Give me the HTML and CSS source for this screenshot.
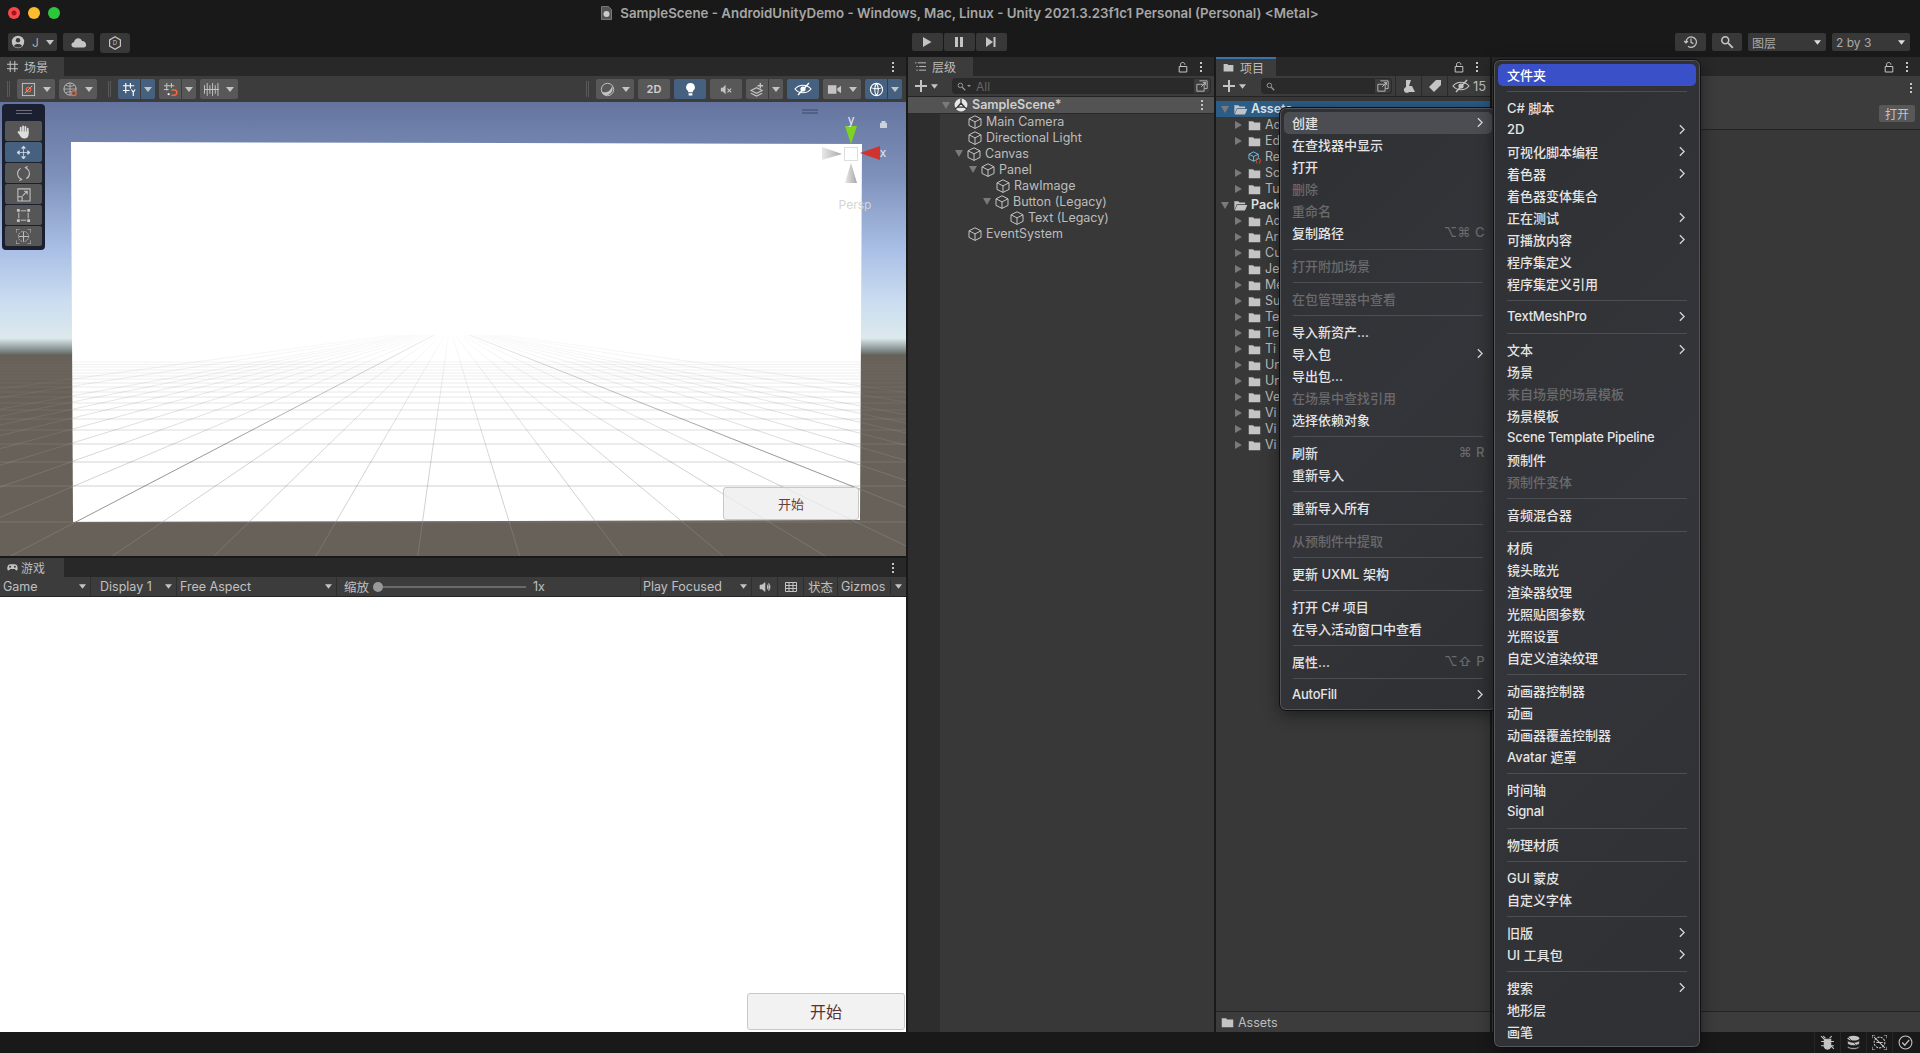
FILE: index.html
```html
<!DOCTYPE html>
<html lang="zh">
<head>
<meta charset="utf-8">
<title>SampleScene - AndroidUnityDemo</title>
<link rel="stylesheet" href="styles.css">
</head>
<body>
<svg class="sprite" aria-hidden="true">
  <symbol id="cube" viewBox="0 0 14 14"><path d="M7 .8 13 3.8V10.4L7 13.4 1 10.4V3.8ZM1 3.8 7 6.9 13 3.8M7 6.9V13.4" fill="none" stroke="currentColor" stroke-width="1"/></symbol>
  <symbol id="folder" viewBox="0 0 14 14"><path d="M.8 2.4H5.4L6.8 3.8H13.2V12.2H.8Z" fill="currentColor"/></symbol>
  <symbol id="folder-open" viewBox="0 0 16 14"><path d="M1 2.4H5.6L7 3.8H13V5.6H4L1.4 12V3ZM4.4 6.4H15.4L12.8 12.4H1.8Z" fill="currentColor"/></symbol>
  <symbol id="lock" viewBox="0 0 10 12"><path d="M2.6 5V3.2C2.6 .9 6.8 .9 6.8 3.2V3.8M1.2 5.5H8.8V11H1.2Z" fill="none" stroke="currentColor" stroke-width="1"/></symbol>
  <symbol id="dots" viewBox="0 0 4 12"><path d="M1 1h2v2H1zM1 5h2v2H1zM1 9h2v2H1z" fill="currentColor"/></symbol>
  <symbol id="plus" viewBox="0 0 14 14"><path d="M7 1V13M1 7H13" stroke="currentColor" stroke-width="2"/></symbol>
  <symbol id="caret" viewBox="0 0 8 5"><path d="M0 0H8L4 5Z" fill="currentColor"/></symbol>
  <symbol id="chev" viewBox="0 0 7 12"><path d="M1 1 6 6 1 11" fill="none" stroke="currentColor" stroke-width="1.4"/></symbol>
  <symbol id="search" viewBox="0 0 12 12"><circle cx="4.5" cy="4.5" r="3" fill="none" stroke="currentColor" stroke-width="1.3"/><path d="M7 7 11 11" stroke="currentColor" stroke-width="1.6"/></symbol>
  <symbol id="adv" viewBox="0 0 14 14"><path d="M4 1H13V10H10M1 5H9.5V13H1ZM6 8 11 3M8 3H11V6" fill="none" stroke="currentColor" stroke-width="1"/></symbol>
  <symbol id="unity" viewBox="0 0 14 14"><circle cx="7" cy="7" r="6.4" fill="currentColor"/><path d="M7 .8V5L3.4 9.2.9 11M7 5 10.6 9.2 13.1 11M3.4 9.2H10.6" fill="none" stroke="#353535" stroke-width="1.3"/></symbol>
  <symbol id="grid" viewBox="0 0 12 12"><path d="M3.5 0V12M8.5 0V12M0 3.5H12M0 8.5H12" stroke="currentColor" stroke-width="1.1"/></symbol>
  <symbol id="eye-off" viewBox="0 0 18 14"><path d="M1 7C5 2 13 2 17 7 13 12 5 12 1 7Z" fill="none" stroke="currentColor" stroke-width="1.2"/><circle cx="9" cy="7" r="2.6" fill="currentColor"/><path d="M4 13 15 1" stroke="currentColor" stroke-width="1.4"/></symbol>
</svg>

<header class="titlebar">
  <div class="lights"><i class="light red"></i><i class="light yellow"></i><i class="light green"></i></div>
  <svg class="doc" viewBox="0 0 11 14"><path d="M.5.5H7.5L10.5 3.5V13.5H.5Z" fill="#555" stroke="#777"/><circle cx="5.500" cy="8" r="3" fill="#ccc"/></svg>
  <span class="wintitle">SampleScene - AndroidUnityDemo - Windows, Mac, Linux - Unity 2021.3.23f1c1 Personal (Personal) &lt;Metal&gt;</span>
</header>

<nav class="maintools">
  <div class="mt-left">
    <div class="mbtn w49"><svg class="ic14" viewBox="0 0 14 14"><circle cx="7" cy="7" r="6.2" fill="#c4c4c4"/><circle cx="7" cy="5.2" r="2.2" fill="#3a3a3a"/><path d="M3 11C4 8.4 10 8.4 11 11 9 13 5 13 3 11Z" fill="#3a3a3a"/></svg><span class="mlabel">J</span><svg class="car"><use href="#caret"/></svg></div>
    <div class="mbtn w31"><svg class="ic-cloud" viewBox="0 0 16 11"><path d="M3.500 10.500C-.5 10.500-.5 5.500 3 5.200 3.500 1 9.500-.5 11 4 15.500 3.800 16.800 10.500 12.500 10.500Z" fill="#c4c4c4"/></svg></div>
    <div class="mbtn w30 tall"><svg class="ic14" viewBox="0 0 14 14"><path d="M7 .8 12.400 3.900V10.100L7 13.200 1.600 10.100V3.900Z" fill="none" stroke="#c4c4c4" stroke-width="1.2"/><text class="hexd" x="7" y="9.200" text-anchor="middle">D</text></svg></div>
  </div>
  <div class="mt-center">
    <div class="mbtn w31"><svg class="ic10" viewBox="0 0 10 10"><path d="M1 0 9.500 5 1 10Z" fill="#c4c4c4"/></svg></div>
    <div class="mbtn w31"><svg class="ic10" viewBox="0 0 10 10"><path d="M1 0H4V10H1ZM6 0H9V10H6Z" fill="#c4c4c4"/></svg></div>
    <div class="mbtn w31"><svg class="ic10" viewBox="0 0 10 10"><path d="M0 0 7 5 0 10ZM7.500 0H9.500V10H7.500Z" fill="#c4c4c4"/></svg></div>
  </div>
  <div class="mt-right">
    <div class="mbtn w31"><svg class="ic14" viewBox="0 0 14 14"><path d="M2 7A5.200 5.200 0 1 1 4 11.200M0 6 2 8 4 6M7 3.500V7.400L9.400 8.600" fill="none" stroke="#c4c4c4" stroke-width="1.2"/></svg></div>
    <div class="mbtn w30 gap-l"><svg class="ic14"><use href="#search" color="#c4c4c4"/></svg></div>
    <div class="mselect gap-l"><span>图层</span><svg class="car small"><use href="#caret"/></svg></div>
    <div class="mselect gap-l"><span>2 by 3</span><svg class="car small"><use href="#caret"/></svg></div>
  </div>
</nav>

<main class="workspace">
  <div class="leftcol">
    <section class="scene panel">
      <div class="tabbar">
        <div class="tab w64"><svg class="tabic"><use href="#grid"/></svg><span>场景</span></div>
        <svg class="dots"><use href="#dots"/></svg>
      </div>
      <div class="scenetools">
        <i class="grip"></i>
        <div class="sbtn w38 m7"><svg class="s16" viewBox="0 0 16 16"><rect x="1.500" y="1.500" width="13" height="13" fill="none" stroke="#c4c4c4"/><path d="M4 12 12 4" stroke="#c4c4c4"/><circle cx="8" cy="8" r="2.400" fill="none" stroke="#f26a3c" stroke-width="1.2"/></svg><svg class="car"><use href="#caret"/></svg></div>
        <div class="sbtn w38"><svg class="s16" viewBox="0 0 16 16"><circle cx="7.500" cy="7.500" r="6.500" fill="none" stroke="#c4c4c4"/><path d="M1 7.500H14M7.500 1V14M3 3.500C6 5 9 5 12 3.500M3 11.500C6 10 9 10 12 11.500" fill="none" stroke="#c4c4c4" stroke-width=".8"/><circle cx="11.500" cy="12" r="2.500" fill="#585858" stroke="#f26a3c" stroke-width="1.2"/></svg><svg class="car"><use href="#caret"/></svg></div>
        <i class="grip m11"></i>
        <div class="split m7 on"><div class="seg a"><svg class="s16" viewBox="0 0 16 16"><path d="M4 1V12M9 1V7M1 4H13M1 9H8M10 8 12 11 14 8M12 11V15" fill="none" stroke="#fff" stroke-width="1.2"/></svg></div><div class="seg b"><svg class="car"><use href="#caret"/></svg></div></div>
        <div class="split"><div class="seg a"><svg class="s16" viewBox="0 0 16 16"><path d="M4 1V9M9 1V6M1 4H12M1 8H6" fill="none" stroke="#c4c4c4" stroke-width="1.1"/><path d="M9 8.500H12A2.600 2.600 0 0 1 12 14H9" fill="none" stroke="#f26a3c" stroke-width="1.6"/><path d="M5 12H7V14H5Z" fill="#fff"/></svg></div><div class="seg b"><svg class="car"><use href="#caret"/></svg></div></div>
        <div class="sbtn w38"><svg class="s16" viewBox="0 0 14 14"><path d="M.5 3V11M3 1V13M5.500 3V11M8 1V13M10.500 3V11M13 1V13M0 7H14" fill="none" stroke="#c4c4c4" stroke-width=".9"/></svg><svg class="car"><use href="#caret"/></svg></div>
        <i class="grip auto"></i>
        <div class="sbtn w38 m7"><svg class="s16" viewBox="0 0 16 16"><circle cx="8" cy="8" r="6.600" fill="none" stroke="#c4c4c4"/><path d="M2 10C6 12 11 11 13 4 15 10 10 15 5 14 3.500 13.500 2.500 12 2 10Z" fill="#c4c4c4"/></svg><svg class="car"><use href="#caret"/></svg></div>
        <div class="sbtn w32 txt">2D</div>
        <div class="sbtn w32 on"><svg class="s16" viewBox="0 0 16 16"><path d="M8 1A4.600 4.600 0 0 0 5.500 9.500V11H10.500V9.500A4.600 4.600 0 0 0 8 1ZM6 12H10V14.500H6Z" fill="#fff"/></svg></div>
        <div class="sbtn w32"><svg class="s16" viewBox="0 0 16 16"><path d="M2 6H4L7 3V13L4 10H2Z" fill="#c4c4c4"/><path d="M9 7 13 11M13 7 9 11" stroke="#c4c4c4" stroke-width="1.200"/></svg></div>
        <div class="split"><div class="seg a"><svg class="s16" viewBox="0 0 16 16"><path d="M1 9 7 6 13 9 7 12ZM1 12 7 15 13 12" fill="none" stroke="#c4c4c4" stroke-width="1.200"/><path d="M11 1V7M8 4H14" stroke="#c4c4c4" stroke-width="1.400"/></svg></div><div class="seg b"><svg class="car"><use href="#caret"/></svg></div></div>
        <div class="sbtn w32 on"><svg class="s18"><use href="#eye-off" color="#fff"/></svg></div>
        <div class="sbtn w38"><svg class="s16" viewBox="0 0 16 16"><path d="M1 3.500H10V12.500H1ZM11 7 15 4V12L11 9Z" fill="#c4c4c4"/></svg><svg class="car"><use href="#caret"/></svg></div>
        <div class="split on"><div class="seg a"><svg class="s16" viewBox="0 0 16 16"><circle cx="8" cy="8" r="6.500" fill="none" stroke="#fff" stroke-width="1.200"/><path d="M1.800 6C5 7.500 11 7.500 14.200 6M8 1.500C5.500 5 5.500 11 8 14.500M8 1.500C10.500 5 10.500 11 8 14.500" fill="none" stroke="#fff" stroke-width="1.100"/></svg></div><div class="seg b"><svg class="car"><use href="#caret"/></svg></div></div>
      </div>
      <div class="viewport">
        <svg class="world" viewBox="0 102 906 454" preserveAspectRatio="none">
          <defs>
            <linearGradient id="sky" x1="0" y1="102" x2="0" y2="356" gradientUnits="userSpaceOnUse">
              <stop offset="0" stop-color="#64749e"/><stop offset=".3" stop-color="#7f92bc"/><stop offset=".58" stop-color="#a9bfe5"/><stop offset=".78" stop-color="#cadcf0"/><stop offset=".93" stop-color="#dce9ec"/><stop offset=".97" stop-color="#8f9b9b"/><stop offset="1" stop-color="#5f5c56"/>
            </linearGradient>
            <linearGradient id="fadeDark" x1="0" y1="335" x2="0" y2="470" gradientUnits="userSpaceOnUse">
              <stop offset="0" stop-color="#000" stop-opacity=".02"/><stop offset="1" stop-color="#000" stop-opacity=".2"/>
            </linearGradient>
            <linearGradient id="fadeMajor" x1="0" y1="335" x2="0" y2="440" gradientUnits="userSpaceOnUse">
              <stop offset="0" stop-color="#000" stop-opacity=".05"/><stop offset="1" stop-color="#000" stop-opacity=".3"/>
            </linearGradient>
            <linearGradient id="fadeLight" x1="0" y1="345" x2="0" y2="480" gradientUnits="userSpaceOnUse">
              <stop offset="0" stop-color="#fff" stop-opacity=".02"/><stop offset="1" stop-color="#fff" stop-opacity=".15"/>
            </linearGradient>
            <clipPath id="quad"><polygon points="71,142 862,144 860,520 73,522"/></clipPath>
            <linearGradient id="cone" x1="0" y1="0" x2="1" y2="0"><stop offset="0" stop-color="#e8e8e8"/><stop offset="1" stop-color="#a8a8a8"/></linearGradient>
            <path id="vlines" d="M-1211 556L391.500 335M-1007.400 556L398.600 335M-803.800 556L405.700 335M-702 556L409.300 335M-600.200 556L412.800 335M-498.400 556L416.400 335M-396.600 556L420 335M-294.800 556L423.500 335M-193 556L427.100 335M-91.200 556L430.600 335M10.600 556L434.200 335M112.400 556L437.700 335M214.200 556L441.300 335M316 556L444.800 335M417.800 556L448.400 335M519.600 556L452 335M621.400 556L455.500 335M723.200 556L459.100 335M825 556L462.600 335M926.800 556L466.200 335M1028.600 556L469.700 335M1130.400 556L473.300 335M1232.200 556L476.800 335M1334 556L480.400 335M1435.800 556L484 335M1537.600 556L487.500 335M1639.400 556L491.100 335M1843 556L498.200 335M2046.600 556L505.300 335"/>
            <path id="hlines" d="M0 522H906M0 486H906M0 462H906M0 444H906M0 430H906M0 419H906M0 410H906M0 403H906M0 397H906M0 392H906M0 387H906M0 383H906M0 379H906M0 376H906M0 373H906M0 370H906M0 367H906M0 364.500H906M0 362H906"/>
          </defs>
          <rect x="0" y="102" width="906" height="254" fill="url(#sky)"/>
          <rect x="0" y="356" width="906" height="200" fill="#676159"/>
          <use href="#vlines" class="glight"/>
          <use href="#hlines" class="glight"/>
          <polygon points="71,142 862,144 860,520 73,522" fill="#fff"/>
          <g clip-path="url(#quad)">
            <use href="#vlines" class="gdark"/>
            <use href="#hlines" class="gdark"/>
            <path d="M10.600 556L434.200 335M1028.600 556L469.700 335" class="gmajor"/>
          </g>
          <path d="M802 110H818M802 113H818" class="handle"/>
          <path d="M880 123H887V128H880ZM881.500 123V121H885.500V123" fill="#ccd2dc"/>
          <path d="M845 126H857L851 144Z" fill="#7ed321"/>
          <path d="M880 146V160L860 153Z" fill="#d0342c"/>
          <path d="M822 147V160L842 154Z" fill="url(#cone)"/>
          <path d="M845 183H857L851 163Z" fill="url(#cone)"/>
          <rect x="844.500" y="147.500" width="13" height="13" fill="#fff" stroke="#ddd"/>
          <text x="851" y="124" class="gz dark" text-anchor="middle">y</text>
          <text x="883" y="157" class="gz" text-anchor="middle">x</text>
          <text x="855" y="209" class="gz persp" text-anchor="middle">Persp</text>
        </svg>
        <div class="overlaytools">
          <div class="handlebar"></div>
          <div class="tool"><svg viewBox="0 0 16 16"><path d="M5 9V4M7.500 8V2.500M10 8V3M12.500 9V5" fill="none" stroke="#ddd" stroke-width="1.900" stroke-linecap="round"/><path d="M4 8H13.500V11C13.500 14 11.500 15.500 9 15.500 6.500 15.500 5.500 14.500 4 12L1.500 8.500 2.800 7.500Z" fill="#ddd"/></svg></div>
          <div class="tool on"><svg viewBox="0 0 16 16"><path d="M8 1 10 3.500H6ZM8 15 6 12.500H10ZM1 8 3.500 6V10ZM15 8 12.500 10V6ZM4 8H12M8 4V12" fill="#d6e0ee" stroke="#d6e0ee" stroke-width=".8"/></svg></div>
          <div class="tool"><svg viewBox="0 0 16 16"><path d="M6 14A6.300 6.300 0 0 1 5 2.500M10 2A6.300 6.300 0 0 1 11 13.500M3 12 6 14.500 3.500 15.500M13 4 10 1.500 12.500.5" fill="none" stroke="#c4c4c4" stroke-width="1.100"/></svg></div>
          <div class="tool"><svg viewBox="0 0 16 16"><path d="M2 2H15V15H2ZM2 10.500H6.500V15M7 9.500 12 4.500M8.500 4.500H12V8" fill="none" stroke="#c4c4c4" stroke-width="1.100"/></svg></div>
          <div class="tool"><svg viewBox="0 0 16 16"><path d="M5 3H11M5 13H11M3 5V11M13 5V11" fill="none" stroke="#c4c4c4"/><path d="M1 1H4V4H1ZM12 1H15V4H12ZM1 12H4V15H1ZM12 12H15V15H12Z" fill="#c4c4c4"/></svg></div>
          <div class="tool"><svg viewBox="0 0 16 16"><circle cx="8" cy="8" r="5.500" fill="none" stroke="#c4c4c4" stroke-dasharray="1.500 1"/><path d="M8 3V13M3 8H13M0 4 0 0 4 0M16 12 16 16 12 16M12 0H16V4M0 12V16H4" fill="none" stroke="#c4c4c4"/></svg></div>
        </div>
        <div class="uibtn small">开始</div>
      </div>
    </section>
    <section class="game panel">
      <div class="tabbar">
        <div class="tab w64 tight"><svg class="tabic" viewBox="0 0 14 10"><path d="M4 1H10C13 1 14 5 13.500 7.500 13 9.500 11 9 10 7H4C3 9 1 9.500.5 7.500 0 5 1 1 4 1Z" fill="#c4c4c4"/><circle cx="4" cy="4" r="1.300" fill="#3c3c3c"/><circle cx="10" cy="4" r="1.300" fill="#3c3c3c"/></svg><span>游戏</span></div>
        <svg class="dots"><use href="#dots"/></svg>
      </div>
      <div class="gametools">
        <div class="gcell g90"><span>Game</span><svg class="car tiny"><use href="#caret"/></svg></div>
        <div class="gcell g86"><span>Display 1</span><svg class="car tiny"><use href="#caret"/></svg></div>
        <div class="gcell g160"><span>Free Aspect</span><svg class="car tiny"><use href="#caret"/></svg></div>
        <div class="gcell gzoom"><span>缩放</span><div class="slider"><i class="knob"></i></div><span>1x</span></div>
        <div class="gcell g111"><span>Play Focused</span><svg class="car tiny"><use href="#caret"/></svg></div>
        <div class="gcell g26 center"><svg class="ic12" viewBox="0 0 12 12"><path d="M1 4H3L6 1.500V10.500L3 8H1ZM8 3.500C9.500 5 9.500 7 8 8.500M9.500 2C11.500 4.500 11.500 7.500 9.500 10" fill="#c4c4c4" stroke="#c4c4c4" stroke-width=".6"/></svg></div>
        <div class="gcell g26 center"><svg class="ic12" viewBox="0 0 12 12"><path d="M.5 1.500H11.500V10.500H.5ZM.5 4.500H11.500M.5 7.500H11.500M4 1.500V10.500M8 1.500V10.500" fill="none" stroke="#c4c4c4"/></svg></div>
        <div class="gcell g34 center"><span>状态</span></div>
        <div class="gcell gend"><span>Gizmos</span><i class="vsep"></i><svg class="car tiny"><use href="#caret"/></svg></div>
      </div>
      <div class="gameview"><div class="uibtn big">开始</div></div>
    </section>
  </div>

  <section class="hierarchy panel">
    <div class="tabbar">
      <div class="tab w65"><svg class="tabic" viewBox="0 0 12 10"><path d="M0 1H1.500M3 1H12M1.500 5H3M4.500 5H12M1.500 9H3M4.500 9H12" stroke="#c4c4c4" stroke-width="1"/></svg><span>层级</span></div>
      <svg class="lock"><use href="#lock"/></svg>
      <svg class="dots near"><use href="#dots"/></svg>
    </div>
    <div class="listtools">
      <svg class="plus"><use href="#plus"/></svg><svg class="car tiny m2"><use href="#caret"/></svg>
      <div class="field hf"><svg class="fsearch"><use href="#search"/></svg><i class="fcaret"></i><span class="ph">All</span><div class="fadv"><svg><use href="#adv"/></svg></div></div>
    </div>
    <div class="tree">
      <div class="row scene-row l0"><i class="tw open"></i><svg class="unity"><use href="#unity"/></svg><span class="sname">SampleScene*</span><svg class="dots rowdots"><use href="#dots"/></svg></div>
      <div class="row l1"><svg class="cube"><use href="#cube"/></svg><span>Main Camera</span></div>
      <div class="row l1"><svg class="cube"><use href="#cube"/></svg><span>Directional Light</span></div>
      <div class="row l1"><i class="tw open"></i><svg class="cube"><use href="#cube"/></svg><span>Canvas</span></div>
      <div class="row l2"><i class="tw open"></i><svg class="cube"><use href="#cube"/></svg><span>Panel</span></div>
      <div class="row l3"><svg class="cube"><use href="#cube"/></svg><span>RawImage</span></div>
      <div class="row l3"><i class="tw open"></i><svg class="cube"><use href="#cube"/></svg><span>Button (Legacy)</span></div>
      <div class="row l4"><svg class="cube"><use href="#cube"/></svg><span>Text (Legacy)</span></div>
      <div class="row l1"><svg class="cube"><use href="#cube"/></svg><span>EventSystem</span></div>
    </div>
  </section>

  <section class="project panel">
    <div class="tabbar">
      <div class="tab w60 blue"><svg class="tabic"><use href="#folder"/></svg><span>项目</span></div>
      <svg class="lock"><use href="#lock"/></svg>
      <svg class="dots near"><use href="#dots"/></svg>
    </div>
    <div class="listtools">
      <svg class="plus"><use href="#plus"/></svg><svg class="car tiny m2"><use href="#caret"/></svg>
      <div class="field pf"><svg class="fsearch"><use href="#search"/></svg><div class="fadv"><svg><use href="#adv"/></svg></div></div>
      <div class="pbtn"><svg viewBox="0 0 14 14"><path d="M4 1H9L7 7H10L13 13H7A3 3 0 1 1 4 8Z" fill="#c4c4c4"/></svg></div>
      <div class="pbtn"><svg viewBox="0 0 14 14"><path d="M8 1H13V6L6 13 1 8Z" fill="#c4c4c4"/></svg></div>
      <div class="pbtn wide"><svg class="eye"><use href="#eye-off" color="#c4c4c4"/></svg><span>15</span></div>
    </div>
    <div class="plist">
      <div class="prow top sel"><i class="tw open"></i><svg class="fold-o"><use href="#folder-open"/></svg><b>Assets</b></div>
      <div class="prow"><i class="tw"></i><svg class="fold"><use href="#folder"/></svg><span>Ad</span></div>
      <div class="prow"><i class="tw"></i><svg class="fold"><use href="#folder"/></svg><span>Ed</span></div>
      <div class="prow"><i class="tw none"></i><svg class="fold" viewBox="0 0 14 14"><path d="M6 1 11 3.500V8.500L6 11 1 8.500V3.500ZM1 3.500 6 6 11 3.500M6 6V11" fill="none" stroke="#6fc4ee" stroke-width="1"/><path d="M10 7.500C9 7.500 9.500 10 8.500 10.500 9.500 11 9 13.500 10 13.500M12 7.500C13 7.500 12.500 10 13.500 10.500 12.500 11 13 13.500 12 13.500" fill="none" stroke="#f0562c"/></svg><span>Re</span></div>
      <div class="prow"><i class="tw"></i><svg class="fold"><use href="#folder"/></svg><span>Sc</span></div>
      <div class="prow"><i class="tw"></i><svg class="fold"><use href="#folder"/></svg><span>Tu</span></div>
      <div class="prow top"><i class="tw open"></i><svg class="fold-o"><use href="#folder-open"/></svg><b>Packages</b></div>
      <div class="prow"><i class="tw"></i><svg class="fold"><use href="#folder"/></svg><span>Ad</span></div>
      <div class="prow"><i class="tw"></i><svg class="fold"><use href="#folder"/></svg><span>Ar</span></div>
      <div class="prow"><i class="tw"></i><svg class="fold"><use href="#folder"/></svg><span>Cu</span></div>
      <div class="prow"><i class="tw"></i><svg class="fold"><use href="#folder"/></svg><span>Je</span></div>
      <div class="prow"><i class="tw"></i><svg class="fold"><use href="#folder"/></svg><span>Me</span></div>
      <div class="prow"><i class="tw"></i><svg class="fold"><use href="#folder"/></svg><span>Su</span></div>
      <div class="prow"><i class="tw"></i><svg class="fold"><use href="#folder"/></svg><span>Te</span></div>
      <div class="prow"><i class="tw"></i><svg class="fold"><use href="#folder"/></svg><span>Te</span></div>
      <div class="prow"><i class="tw"></i><svg class="fold"><use href="#folder"/></svg><span>Ti</span></div>
      <div class="prow"><i class="tw"></i><svg class="fold"><use href="#folder"/></svg><span>Un</span></div>
      <div class="prow"><i class="tw"></i><svg class="fold"><use href="#folder"/></svg><span>Un</span></div>
      <div class="prow"><i class="tw"></i><svg class="fold"><use href="#folder"/></svg><span>Ve</span></div>
      <div class="prow"><i class="tw"></i><svg class="fold"><use href="#folder"/></svg><span>Vi</span></div>
      <div class="prow"><i class="tw"></i><svg class="fold"><use href="#folder"/></svg><span>Vi</span></div>
      <div class="prow"><i class="tw"></i><svg class="fold"><use href="#folder"/></svg><span>Vi</span></div>
    </div>
    <div class="pathbar"><svg class="fold"><use href="#folder"/></svg><span>Assets</span></div>
  </section>

  <section class="inspector panel">
    <div class="tabbar">
      <svg class="lock"><use href="#lock"/></svg>
      <svg class="dots near"><use href="#dots"/></svg>
    </div>
    <div class="inshead">
      <svg class="dots insdots"><use href="#dots"/></svg>
      <div class="openbtn">打开</div>
    </div>
    <div class="insbody"></div>
    <div class="insfoot"></div>
  </section>
</main>

<footer class="statusbar">
  <div class="stat"><svg viewBox="0 0 14 14"><path d="M4 4H10V11C9 14 5 14 4 11ZM1 1 13 13M1 6H13M1 10H13M3 1 5 3M11 1 9 3" fill="#c4c4c4" stroke="#c4c4c4"/></svg></div>
  <div class="stat"><svg viewBox="0 0 14 14"><ellipse cx="7" cy="3" rx="5.500" ry="2.200" fill="#c4c4c4"/><path d="M1.500 5C3 7.500 11 7.500 12.500 5V8C11 10.500 3 10.500 1.500 8ZM1.500 10C3 12.500 11 12.500 12.500 10V11.500C11 14 3 14 1.500 11.500ZM1 1 13 13" fill="#c4c4c4" stroke="#191919" stroke-width=".6"/></svg></div>
  <div class="stat"><svg viewBox="0 0 14 14"><circle cx="7" cy="7" r="5" fill="none" stroke="#c4c4c4" stroke-dasharray="2 1"/><path d="M0 3V0H3M14 3V0H11M0 11V14H3M14 11V14H11M2 2 12 12M4 7H10" fill="none" stroke="#c4c4c4"/></svg></div>
  <div class="stat"><svg viewBox="0 0 14 14"><circle cx="7" cy="7" r="6" fill="none" stroke="#c4c4c4"/><path d="M4 7 6.300 9.500 10.500 4.500" fill="none" stroke="#c4c4c4" stroke-width="1.200"/></svg></div>
</footer>

<div class="menu m-one">
  <div class="mi hot"><span>创建</span><svg class="chev"><use href="#chev"/></svg></div>
  <div class="mi"><span>在查找器中显示</span></div>
  <div class="mi"><span>打开</span></div>
  <div class="mi off"><span>删除</span></div>
  <div class="mi off"><span>重命名</span></div>
  <div class="mi"><span>复制路径</span><em>⌥⌘ C</em></div>
  <hr>
  <div class="mi off"><span>打开附加场景</span></div>
  <hr>
  <div class="mi off"><span>在包管理器中查看</span></div>
  <hr>
  <div class="mi"><span>导入新资产...</span></div>
  <div class="mi"><span>导入包</span><svg class="chev"><use href="#chev"/></svg></div>
  <div class="mi"><span>导出包...</span></div>
  <div class="mi off"><span>在场景中查找引用</span></div>
  <div class="mi"><span>选择依赖对象</span></div>
  <hr>
  <div class="mi"><span>刷新</span><em>⌘ R</em></div>
  <div class="mi"><span>重新导入</span></div>
  <hr>
  <div class="mi"><span>重新导入所有</span></div>
  <hr>
  <div class="mi off"><span>从预制件中提取</span></div>
  <hr>
  <div class="mi"><span>更新 UXML 架构</span></div>
  <hr>
  <div class="mi"><span>打开 C# 项目</span></div>
  <div class="mi"><span>在导入活动窗口中查看</span></div>
  <hr>
  <div class="mi"><span>属性...</span><em>⌥⇧ P</em></div>
  <hr>
  <div class="mi"><span class="en">AutoFill</span><svg class="chev"><use href="#chev"/></svg></div>
</div>

<div class="menu m-two">
  <div class="mi blue"><span>文件夹</span></div>
  <hr>
  <div class="mi"><span>C# 脚本</span></div>
  <div class="mi"><span>2D</span><svg class="chev"><use href="#chev"/></svg></div>
  <div class="mi"><span>可视化脚本编程</span><svg class="chev"><use href="#chev"/></svg></div>
  <div class="mi"><span>着色器</span><svg class="chev"><use href="#chev"/></svg></div>
  <div class="mi"><span>着色器变体集合</span></div>
  <div class="mi"><span>正在测试</span><svg class="chev"><use href="#chev"/></svg></div>
  <div class="mi"><span>可播放内容</span><svg class="chev"><use href="#chev"/></svg></div>
  <div class="mi"><span>程序集定义</span></div>
  <div class="mi"><span>程序集定义引用</span></div>
  <hr>
  <div class="mi"><span class="en">TextMeshPro</span><svg class="chev"><use href="#chev"/></svg></div>
  <hr>
  <div class="mi"><span>文本</span><svg class="chev"><use href="#chev"/></svg></div>
  <div class="mi"><span>场景</span></div>
  <div class="mi off"><span>来自场景的场景模板</span></div>
  <div class="mi"><span>场景模板</span></div>
  <div class="mi"><span class="en">Scene Template Pipeline</span></div>
  <div class="mi"><span>预制件</span></div>
  <div class="mi off"><span>预制件变体</span></div>
  <hr>
  <div class="mi"><span>音频混合器</span></div>
  <hr>
  <div class="mi"><span>材质</span></div>
  <div class="mi"><span>镜头眩光</span></div>
  <div class="mi"><span>渲染器纹理</span></div>
  <div class="mi"><span>光照贴图参数</span></div>
  <div class="mi"><span>光照设置</span></div>
  <div class="mi"><span>自定义渲染纹理</span></div>
  <hr>
  <div class="mi"><span>动画器控制器</span></div>
  <div class="mi"><span>动画</span></div>
  <div class="mi"><span>动画器覆盖控制器</span></div>
  <div class="mi"><span>Avatar 遮罩</span></div>
  <hr>
  <div class="mi"><span>时间轴</span></div>
  <div class="mi"><span class="en">Signal</span></div>
  <hr>
  <div class="mi"><span>物理材质</span></div>
  <hr>
  <div class="mi"><span>GUI 蒙皮</span></div>
  <div class="mi"><span>自定义字体</span></div>
  <hr>
  <div class="mi"><span>旧版</span><svg class="chev"><use href="#chev"/></svg></div>
  <div class="mi"><span>UI 工具包</span><svg class="chev"><use href="#chev"/></svg></div>
  <hr>
  <div class="mi"><span>搜索</span><svg class="chev"><use href="#chev"/></svg></div>
  <div class="mi"><span>地形层</span></div>
  <div class="mi"><span>画笔</span></div>
</div>
</body>
</html>
```

FILE: styles.css
```css
* { box-sizing: border-box; }
html, body { margin: 0; height: 100%; }
body {
  position: relative;
  width: 1920px;
  height: 1053px;
  overflow: hidden;
  display: flex;
  flex-direction: column;
  background: #191919;
  color: #c4c4c4;
  font: 12px Inter, "Noto Sans CJK SC", sans-serif;
}
svg { display: block; flex: none; }
.sprite { position: absolute; width: 0; height: 0; }

/* title bar */
.titlebar { height: 28px; flex: none; display: flex; align-items: center; justify-content: center; position: relative; padding-bottom: 3px; }
.lights { position: absolute; left: 8px; top: 7px; display: flex; gap: 8px; }
.light { width: 12px; height: 12px; border-radius: 50%; display: block; }
.red { background: radial-gradient(circle, #a5141c 0 2px, #f9484c 3px); }
.yellow { background: #fdbc2c; }
.green { background: #2cc83c; }
.doc { width: 11px; height: 14px; margin-right: 8px; }
.wintitle { color: #a6a6a6; font-size: 13.3px; font-weight: 600; }

/* main toolbar */
.maintools { height: 29px; flex: none; display: grid; grid-template-columns: 1fr auto 1fr; padding: 5px 10px 0 8px; align-items: start; }
.mt-left { display: flex; gap: 6px; }
.mt-center { display: flex; gap: 1px; }
.mt-right { display: flex; justify-content: flex-end; }
.mbtn { height: 18px; background: #383838; display: flex; align-items: center; justify-content: center; border-radius: 2px; }
.w49 { width: 49px; gap: 7px; }
.w31 { width: 31px; }
.w30 { width: 30px; }
.tall { height: 20px; border-radius: 3px; }
.gap-l { margin-left: 6px; }
.ic14 { width: 14px; height: 14px; }
.ic10 { width: 10px; height: 10px; }
.ic12 { width: 12px; height: 12px; }
.ic-cloud { width: 16px; height: 11px; }
.hexd { font-size: 6px; fill: #c4c4c4; }
.mlabel { font-size: 12px; color: #aaa; }
.car { width: 8px; height: 5px; color: #c4c4c4; }
.car.small { width: 7px; height: 5px; color: #ddd; }
.car.tiny { width: 7px; height: 5px; }
.mselect { width: 78px; height: 18px; background: #383838; display: flex; align-items: center; justify-content: space-between; padding: 0 5px 0 4px; color: #aaa; border-radius: 2px; }

/* workspace */
.workspace { flex: 1; min-height: 0; display: grid; grid-template-columns: 906px 306px 274px 1fr; gap: 2px; }
.leftcol { display: flex; flex-direction: column; gap: 2px; min-height: 0; }
.panel { display: flex; flex-direction: column; background: #383838; min-height: 0; position: relative; }
.scene { height: 499px; flex: none; }
.game { flex: 1; }
.tabbar { height: 19px; flex: none; background: #282828; display: flex; align-items: center; }
.tab { height: 19px; background: #3c3c3c; display: flex; align-items: center; gap: 6px; padding-left: 7px; color: #bdbdbd; font-size: 12px; }
.tab.tight { gap: 3px; }
.w64 { width: 64px; }
.w65 { width: 65px; }
.w60 { width: 60px; }
.blue.tab { border-top: 2px solid #3a72b0; }
.tabic { width: 11px; height: 11px; color: #c4c4c4; }
.dots { width: 4px; height: 12px; margin-left: auto; margin-right: 11px; color: #c4c4c4; }
.dots.near { margin-left: 11px; }
.lock { width: 10px; height: 12px; margin-left: auto; color: #c4c4c4; }

/* scene toolbar */
.scenetools { height: 26px; flex: none; background: #3c3c3c; display: flex; align-items: center; gap: 4px; padding: 0 4px 0 7px; }
.grip { width: 3px; height: 16px; border-left: 1px solid #595959; border-right: 1px solid #595959; display: block; flex: none; }
.m7 { margin-left: 3px; }
.m11 { margin-left: 7px; }
.grip.auto { margin-left: auto; }
.sbtn { height: 20px; background: #585858; border-radius: 2px; display: flex; align-items: center; justify-content: center; flex: none; }
.w38 { width: 38px; justify-content: flex-start; padding-left: 4px; gap: 7px; }
.w32 { width: 32px; }
.txt { font-size: 11px; font-weight: 600; color: #d0d0d0; }
.sbtn.on { background: #46607f; }
.s16 { width: 15px; height: 15px; }
.s18 { width: 18px; height: 14px; }
.split { display: flex; gap: 1px; flex: none; height: 20px; }
.seg { background: #585858; height: 20px; display: flex; align-items: center; justify-content: center; }
.seg.a { width: 22px; border-radius: 2px 0 0 2px; }
.seg.b { width: 14px; border-radius: 0 2px 2px 0; }
.split.on .seg { background: #46607f; }

/* viewport */
.viewport { flex: 1; position: relative; overflow: hidden; }
.world { display: block; width: 906px; height: 454px; }
.glight { fill: none; stroke: url(#fadeLight); stroke-width: .8; }
.gdark { fill: none; stroke: url(#fadeDark); stroke-width: .9; }
.gmajor { fill: none; stroke: url(#fadeMajor); stroke-width: .9; }
.handle { stroke: #3d4a68; stroke-width: 1; }
.gz { font: 12px Inter, sans-serif; fill: #e8e8e8; }
.gz.dark { fill: #e8ecf4; }
.gz.persp { fill: #d4d4d4; }
.overlaytools { position: absolute; left: 2px; top: 2px; width: 43px; height: 146px; background: #1b2030; border-radius: 4px; padding: 17px 3px 0; display: flex; flex-direction: column; gap: 1px; }
.handlebar { position: absolute; left: 14px; top: 6px; width: 16px; height: 4px; border-top: 1px solid #6a6f7a; border-bottom: 1px solid #6a6f7a; }
.tool { height: 20px; background: #565656; border-radius: 2px; display: flex; align-items: center; justify-content: center; }
.tool.on { background: #46607f; }
.tool svg { width: 15px; height: 15px; }
.uibtn { position: absolute; border: 1px solid #c8c8c8; border-radius: 3px; display: flex; align-items: center; justify-content: center; }
.uibtn.small { left: 723px; top: 385px; width: 136px; height: 33px; font-size: 13px; background: rgba(236,236,236,.75); color: #6a3c3c; }
.uibtn.big { right: 1px; bottom: 2px; width: 158px; height: 37px; font-size: 16px; background: #f2f2f2; color: #5a3030; padding-bottom: 1px; }

/* game toolbar */
.gametools { height: 20px; flex: none; background: #3c3c3c; display: flex; border-bottom: 1px solid #232323; }
.gcell { height: 19px; border-right: 1px solid #2e2e2e; display: flex; align-items: center; justify-content: space-between; padding: 0 4px 0 3px; flex: none; color: #c0c0c0; font-size: 12.5px; }
.g90 { width: 91px; }
.g86 { width: 86px; padding-left: 9px; }
.g160 { width: 160px; }
.gzoom { width: 304px; justify-content: flex-start; gap: 7px; padding-left: 7px; }
.slider { width: 150px; height: 2px; background: #6a6a6a; position: relative; }
.knob { position: absolute; left: -3px; top: -4px; width: 10px; height: 10px; border-radius: 50%; background: #999; display: block; }
.g111 { width: 111px; padding-left: 2px; }
.g26 { width: 26px; }
.g34 { width: 34px; }
.center { justify-content: center; padding: 0; }
.gend { flex: 1; border-right: none; padding-left: 3px; }
.vsep { width: 1px; height: 14px; background: #2a2a2a; display: block; }
.gameview { flex: 1; background: #fff; position: relative; }

/* hierarchy */
.listtools { height: 21px; flex: none; background: #3c3c3c; display: flex; align-items: center; border-bottom: 1px solid #232323; padding-left: 6px; }
.plus { width: 14px; height: 14px; color: #c4c4c4; }
.m2 { margin-left: 3px; }
.field { height: 16px; display: flex; align-items: center; background: #2a2a2a; border-radius: 4px; position: relative; }
.hf { width: 259px; margin-left: 14px; }
.pf { width: 131px; margin-left: 15px; }
.fsearch { width: 9px; height: 9px; margin-left: 5px; color: #999; }
.fcaret { width: 0; height: 0; border: 2px solid transparent; border-top-color: #999; margin: 2px 0 0 1px; display: block; }
.ph { color: #666; margin-left: 5px; }
.fadv { width: 18px; height: 16px; background: #3c3c3c; border: 1px solid #2a2a2a; border-radius: 0 4px 4px 0; display: flex; align-items: center; justify-content: center; position: absolute; right: 0; top: 0; }
.fadv svg { width: 12px; height: 12px; color: #c4c4c4; }
.tree { flex: 1; background: linear-gradient(90deg, #2d2d2d 0 32px, #383838 32px); }
.row { height: 16px; display: flex; align-items: center; font-size: 12.5px; line-height: 14px; color: #bdbdbd; padding-bottom: 1px; }
.scene-row { height: 17px; background: #535353; border-bottom: 1px solid #2a2a2a; padding-bottom: 0; }
.sname { font-weight: 600; color: #cfcfcf; margin-left: 4px; }
.rowdots { margin-right: 10px; }
.tw { display: block; width: 0; height: 0; flex: none; border-style: solid; border-width: 4.5px 0 4.5px 7px; border-color: transparent transparent transparent #7a7a7a; margin-right: 8px; }
.tw.open { border-width: 7px 4.5px 0 4.5px; border-color: #7a7a7a transparent transparent transparent; }
.tw.none { border-color: transparent; }
.row .tw.open { margin-left: -13px; margin-right: 4px; }
.unity { width: 14px; height: 14px; color: #e8e8e8; }
.cube { width: 14px; height: 14px; color: #c4c4c4; margin-right: 4px; }
.l0 { padding-left: 47px; }
.l1 { padding-left: 60px; }
.l2 { padding-left: 74px; }
.l3 { padding-left: 88px; }
.l4 { padding-left: 102px; }

/* project */
.pbtn { width: 26px; height: 20px; display: flex; align-items: center; justify-content: center; border-left: 1px solid #2a2a2a; }
.pf + .pbtn { margin-left: 3px; }
.pbtn svg { width: 14px; height: 14px; }
.pbtn.wide { width: 43px; gap: 3px; font-size: 13px; color: #bbb; }
.pbtn svg.eye { width: 18px; height: 14px; }
.plist { flex: 1; padding-top: 4px; background: #383838; }
.prow { height: 16px; display: flex; align-items: center; padding-left: 19px; font-size: 12.5px; line-height: 14px; color: #bdbdbd; }
.prow .tw { margin-right: 6px; }
.prow.top { padding-left: 5px; }
.prow.top .tw.open { margin-right: 4px; }
.prow.sel { background: #2c5d87; color: #fff; }
.prow b { font-weight: 600; color: #e0e0e0; margin-left: 3px; }
.fold { width: 13px; height: 13px; color: #c4c4c4; margin-right: 4px; }
.fold-o { width: 15px; height: 13px; color: #c4c4c4; }
.pathbar { height: 21px; flex: none; background: #3c3c3c; border-top: 1px solid #232323; display: flex; align-items: center; padding-left: 5px; font-size: 12.5px; color: #bdbdbd; }

/* inspector */
.inshead { height: 54px; flex: none; background: #3c3c3c; border-bottom: 1px solid #232323; position: relative; }
.insdots { position: absolute; right: 7px; top: 6px; margin: 0; }
.openbtn { position: absolute; right: 5px; top: 29px; width: 36px; height: 17px; background: #585858; border-radius: 2px; display: flex; align-items: center; justify-content: center; font-size: 12px; color: #c4c4c4; }
.insbody { flex: 1; }
.insfoot { height: 21px; flex: none; background: #3c3c3c; border-top: 1px solid #232323; }

/* status */
.statusbar { height: 21px; flex: none; display: flex; justify-content: flex-end; padding-right: 2px; }
.stat { width: 26px; height: 21px; display: flex; align-items: center; justify-content: center; border-left: 1px solid #262626; }
.stat svg { width: 15px; height: 15px; }

/* menus */
.menu { position: absolute; background: linear-gradient(135deg, #2f3033, #34353a 50%, #2f3033); border: 1px solid #101010; box-shadow: inset 0 0 0 1px #55565a, 0 4px 16px rgba(0,0,0,.45); border-radius: 7px; padding: 4px; color: #e4e4e4; font-size: 13px; }
.m-one { left: 1279px; top: 107px; width: 218px; }
.m-two { left: 1493px; top: 59px; width: 208px; }
.mi { height: 22px; display: flex; align-items: center; justify-content: space-between; padding: 0 11px 2px 9px; border-radius: 5px; font-weight: 500; }
.mi.off { color: #6a6a6c; }
.mi.hot { background: #4b4d52; }
.mi.blue { background: #3a50c8; color: #fff; }
.mi .en { letter-spacing: -.22px; }
.m-one .mi { padding-left: 8px; padding-right: 9px; }
.mi em { font-style: normal; color: #6a6a6c; margin-right: -2px; letter-spacing: .5px; }
.chev { width: 6px; height: 11px; color: #dcdcdc; }
.menu hr { height: 1px; margin: 5px 9px; border: none; background: #4d4e52; }
```
